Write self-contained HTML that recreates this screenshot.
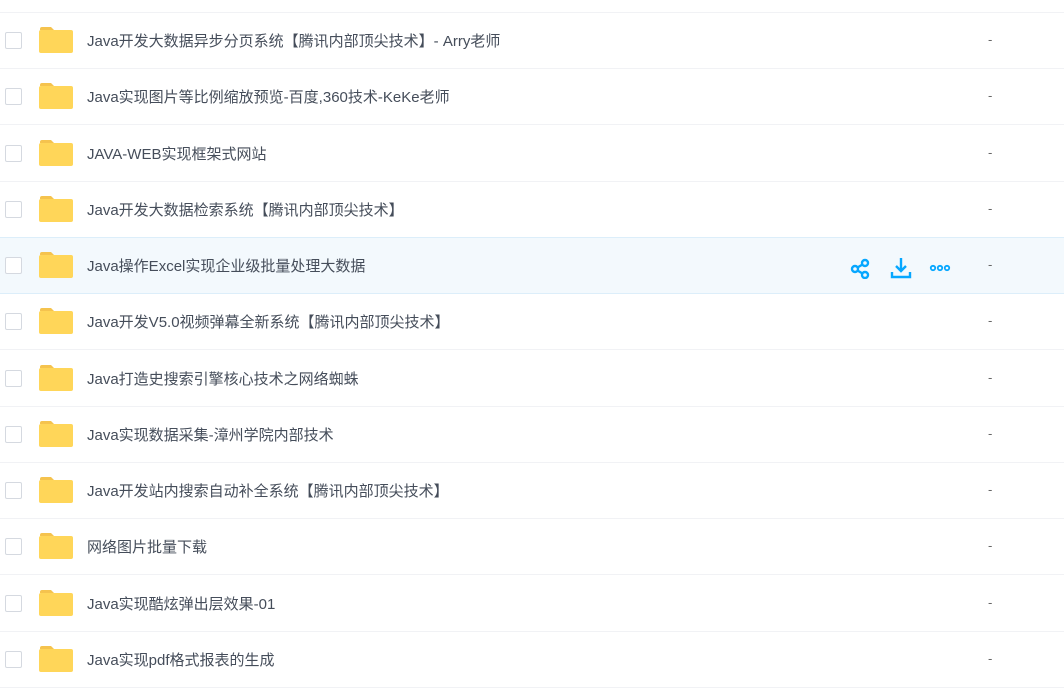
<!DOCTYPE html>
<html><head><meta charset="utf-8"><style>
body{margin:0;width:1064px;height:659px;overflow:hidden;background:#fff;font-family:"Liberation Sans","Noto Sans CJK SC",sans-serif;}
.top{position:absolute;left:0;top:12px;width:1064px;height:1px;background:#f1f2f5}
.row{position:absolute;left:0;width:1064px;height:55px;border-bottom:1px solid #f1f2f5;}
.row.h{background:#f3f9fd;border-top:1px solid #dceefa;border-bottom:1px solid #dceefa;margin-top:-1px}
.cb{position:absolute;left:5px;top:19px;width:15px;height:15px;border:1px solid #d5d9e0;border-radius:2px;background:#fff}
.fd{position:absolute;left:39px;top:14px}
.t{position:absolute;left:87px;top:17px;font-size:15px;color:#454d5a;white-space:nowrap}
.d{position:absolute;left:988px;top:19px;font-size:13px;color:#666}
.ic{position:absolute;top:19px}
</style></head><body>
<div class="top"></div>
<div id="c"></div>
<script>
var n=["Java开发大数据异步分页系统【腾讯内部顶尖技术】- Arry老师","Java实现图片等比例缩放预览-百度,360技术-KeKe老师","JAVA-WEB实现框架式网站","Java开发大数据检索系统【腾讯内部顶尖技术】","Java操作Excel实现企业级批量处理大数据","Java开发V5.0视频弹幕全新系统【腾讯内部顶尖技术】","Java打造史搜索引擎核心技术之网络蜘蛛","Java实现数据采集-漳州学院内部技术","Java开发站内搜索自动补全系统【腾讯内部顶尖技术】","网络图片批量下载","Java实现酷炫弹出层效果-01","Java实现pdf格式报表的生成"];
var h='';
for(var i=0;i<n.length;i++){var yy=13+i*56.25;
var ic=i==4?'<svg class="ic" style="left:850px" width="22" height="22" viewBox="0 0 22 22" fill="none" stroke="#06a7ff" stroke-width="2.4"><circle cx="5" cy="12" r="3"/><circle cx="15" cy="6" r="3"/><circle cx="15" cy="18" r="3"/><path d="M7.5 10.5L12.5 7.5M7.5 13.5L12.5 16.5"/></svg><svg class="ic" style="left:890px" width="22" height="22" viewBox="0 0 22 22" fill="none" stroke="#06a7ff" stroke-width="2.4"><path d="M11 1v13M6 9l5 5 5-5M2 15v5h18v-5"/></svg><svg class="ic" style="left:929px" width="22" height="22" viewBox="0 0 22 22" fill="none" stroke="#06a7ff" stroke-width="1.8"><circle cx="4" cy="11" r="2.2"/><circle cx="11" cy="11" r="2.2"/><circle cx="18" cy="11" r="2.2"/></svg>':'';
h+='<div class="row'+(i==4?' h':'')+'" style="top:'+yy+'px"><div class="cb"></div><svg class="fd" width="34" height="26" viewBox="0 0 34 26"><path d="M1 2a2 2 0 0 1 2-2h9l3 3H1z" fill="#f5c34e"/><rect x="0" y="3" width="34" height="23" rx="2" fill="#ffd659"/></svg><div class="t">'+n[i]+'</div>'+ic+'<div class="d">-</div></div>';}
document.getElementById('c').innerHTML=h;
</script>
</body></html>
